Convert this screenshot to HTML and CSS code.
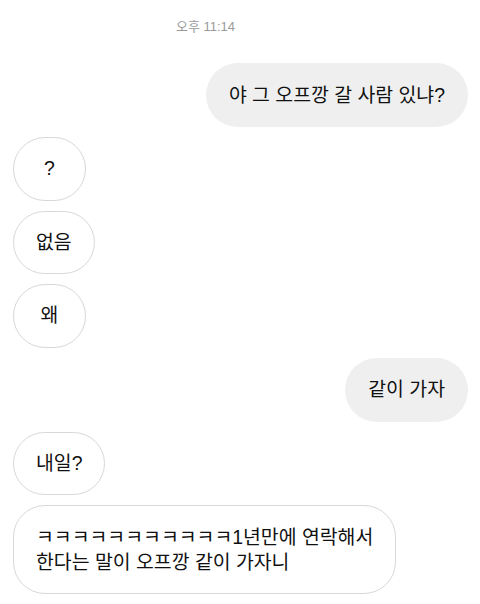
FILE: index.html
```html
<!DOCTYPE html>
<html lang="ko">
<head>
<meta charset="utf-8">
<link rel="stylesheet" href="styles.css">
</head>
<body>
<div class="chat">
  <div class="time">오후 11:14</div>
  <div class="row out"><div class="bubble sent">야 그 오프깡 갈 사람 있냐?</div></div>
  <div class="row in"><div class="bubble recv">?</div></div>
  <div class="row in"><div class="bubble recv">없음</div></div>
  <div class="row in"><div class="bubble recv">왜</div></div>
  <div class="row out"><div class="bubble sent">같이 가자</div></div>
  <div class="row in"><div class="bubble recv">내일?</div></div>
  <div class="row in"><div class="bubble recv wide">ㅋㅋㅋㅋㅋㅋㅋㅋㅋㅋㅋ1년만에 연락해서<br>한다는 말이 오프깡 같이 가자니</div></div>
</div>
</body>
</html>
```
FILE: styles.css
```css
* { box-sizing: border-box; }
html, body { margin: 0; padding: 0; background: #ffffff; }
body {
  font-family: "Liberation Sans", "Noto Sans CJK KR", sans-serif;
  color: #111111;
  width: 480px;
  height: 604px;
  overflow: hidden;
}
.chat {
  display: flex;
  flex-direction: column;
  gap: 10px;
  padding: 19px 12px 0 13px;
}
.time {
  font-size: 13px;
  line-height: 16px;
  color: #9a9a9a;
  text-align: center;
  padding-right: 70px;
  margin-bottom: 18px;
}
.row { display: flex; }
.row.out { justify-content: flex-end; }
.row.in { justify-content: flex-start; }
.bubble {
  font-size: 19.4px;
  line-height: 25px;
  border-radius: 32px;
  min-width: 73px;
  text-align: center;
  padding: 19.5px 23px;
}
.sent { background: #efefef; }
.recv {
  background: #ffffff;
  border: 1.2px solid #d8d8d8;
  padding: 18.3px 22px;
}
.recv.wide { text-align: left; }
```
